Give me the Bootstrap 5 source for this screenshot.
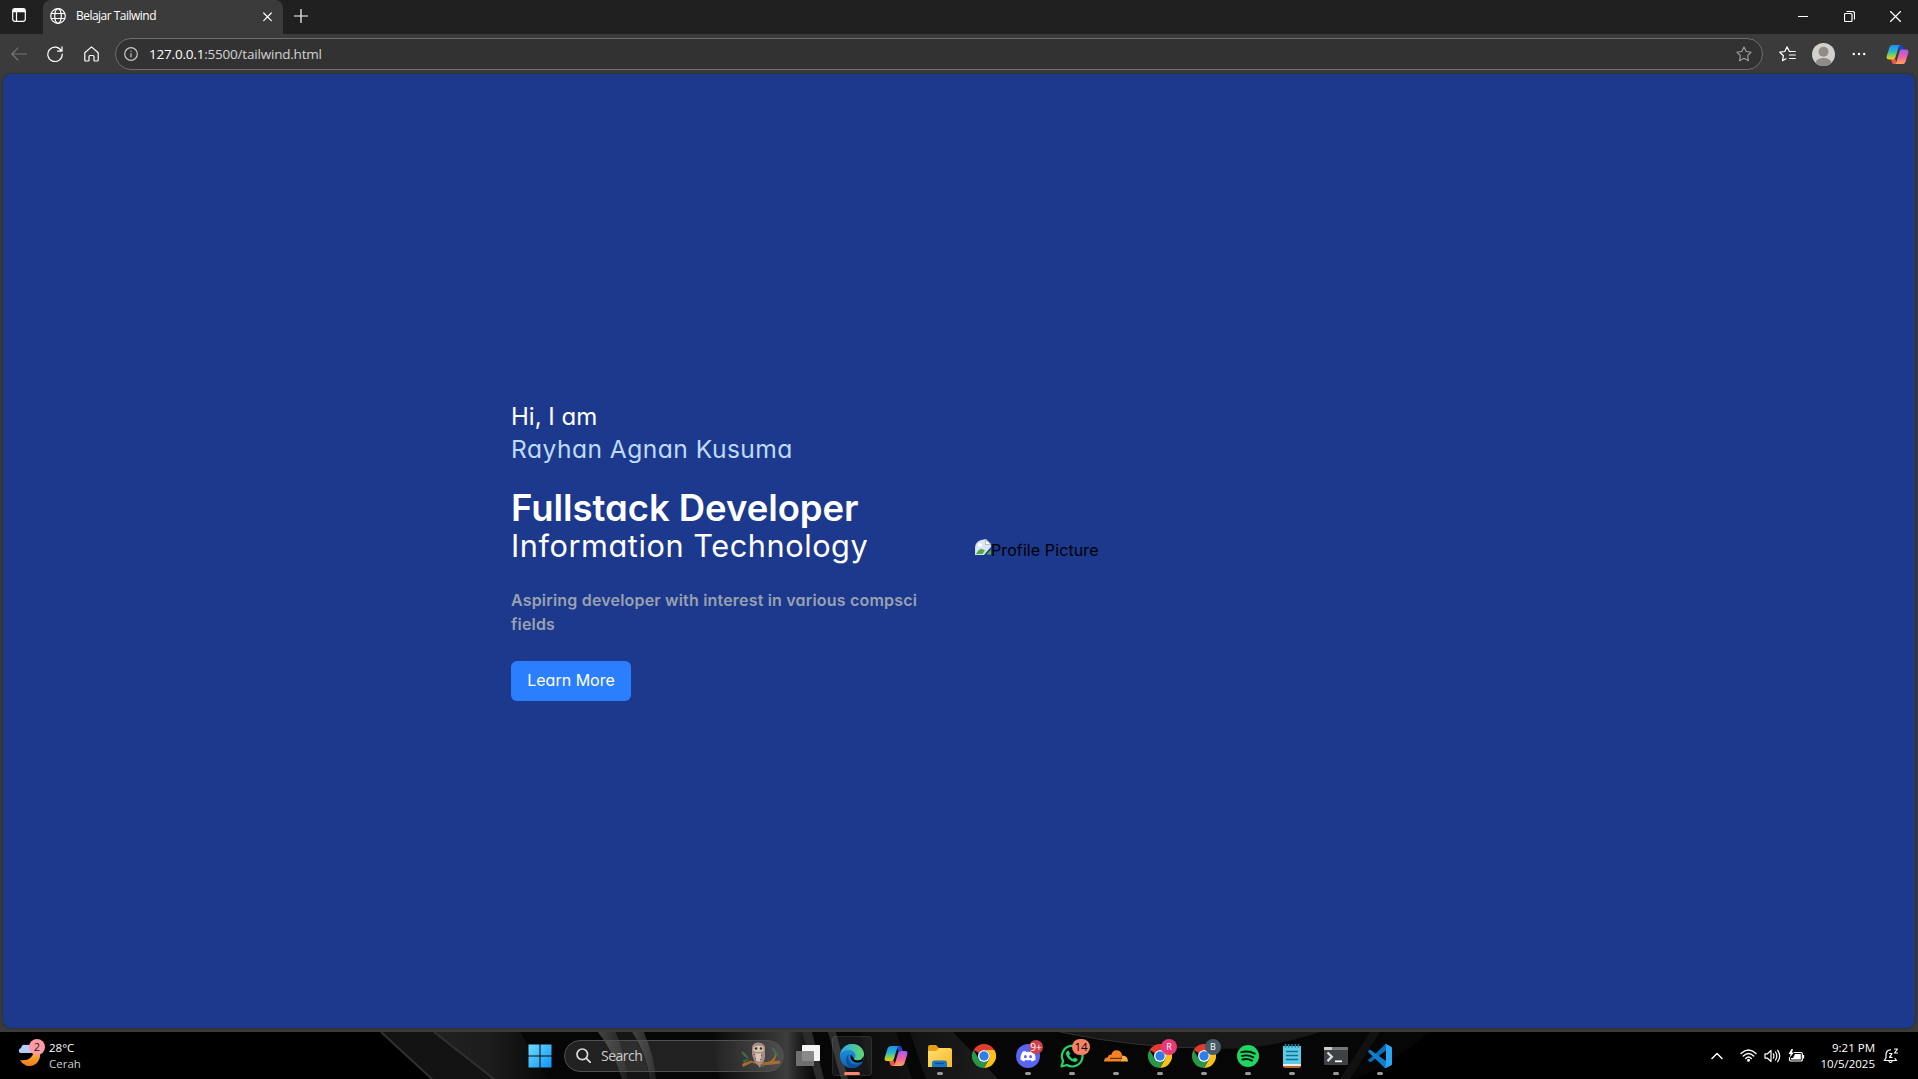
<!DOCTYPE html>
<html lang="en">
<head>
<meta charset="utf-8">
<meta name="viewport" content="width=device-width, initial-scale=1">
<title>Belajar Tailwind</title>
<link href="https://cdn.jsdelivr.net/npm/bootstrap@5.3.0/dist/css/bootstrap.min.css" rel="stylesheet">
<style>
  body { height: 100vh; overflow: hidden; background: #3b3b3b; font-family: "Open Sans", "Noto Sans", sans-serif; color: #fff; }
  svg { display: block; flex: none; }
  .ln { fill: none; stroke: #fff; stroke-width: 1.2; stroke-linecap: round; stroke-linejoin: round; }
  .titlebar { height: 34px; background: #202020; }
  .tab-actions { width: 43px; padding-left: 12px; }
  .browser-tab { width: 240px; background: #3b3b3b; border-radius: 8px 8px 0 0; padding: 0 9px 2px 7px; font-size: 12px; }
  .tab-title { margin-left: 10px; letter-spacing: -.52px; line-height: 16px; }
  .newtab { width: 35px; padding-bottom: 3px; }
  .winbtn { width: 46px; padding-bottom: 2px; }
  .toolbar { height: 40px; padding: 0 1px; }
  .tool { width: 36px; height: 40px; }
  .tool-wide { width: 40px; }
  .address { height: 32px; margin: 0 6px; padding: 0 10px 0 8px; background: #323232; border: 1px solid #6e6e6e; border-radius: 16px; font-size: 13.5px; }
  .url { margin-left: 11px; letter-spacing: -.2px; color: #d2d2d2; }
  .url b { font-weight: 400; color: #fff; }
  .frame { padding: 0 3px 4px; min-height: 0; }
  .hero { background: #1c398e; border-radius: 8px; padding-left: 508px; font-family: Inter, "Open Sans", sans-serif; font-feature-settings: "cv11"; box-shadow: 0 0 3px #0006; }
  .intro { width: 464px; }
  .hi, .who { font-size: 24px; line-height: 32px; font-weight: 400; }
  .who { color: #bedbff; font-size: 24.6px; letter-spacing: .47px; }
  .role { font-size: 36.5px; line-height: 38px; padding-bottom: 2px; font-weight: 600; letter-spacing: -.05px; }
  .field-name { font-size: 30.7px; line-height: 34px; padding-bottom: 2px; letter-spacing: .56px; }
  .about { width: 432px; color: #99a1af; font-weight: 600; font-size: 16px; line-height: 24px; letter-spacing: .19px; margin: -1px 0 25px; }
  .btn-learn { --bs-btn-bg: #2b7fff; --bs-btn-color: #fff; width: 120px; height: 40px; border: 0; border-radius: 6px; padding: 7px 0 9px; font-size: 16px; line-height: 24px; }
  .alt-text { font-size: 16px; line-height: 24px; color: #000; letter-spacing: .1px; padding-bottom: 3px; }
  .alt-text svg { margin-top: -6px; }
  .taskbar { height: 47px; background: #000; position: relative; }
  .wallpaper { position: absolute; left: 370px; top: 0; }
  .taskbar > .zone { position: relative; }
  .weather { width: 518px; padding-left: 17px; font-size: 11.5px; line-height: 16px; }
  .weather svg { margin-top: -6px; }
  .search-pill { width: 220px; height: 32px; margin: 0 2px; border-radius: 16px; border: 1px solid #505050; background: #ffffff1c; padding: 0 1px 0 11px; font-size: 14px; letter-spacing: -.5px; color: #ccc; }
  .search-pill span { margin-left: 10px; }
  .app { width: 44px; height: 47px; position: relative; }
  .app.on::before { content: ""; position: absolute; left: 2px; top: 4px; width: 40px; height: 40px; border-radius: 4px; background: #ffffff12; border: 1px solid #ffffff14; }
  .app.run::after { content: ""; position: absolute; left: 19px; bottom: 4px; width: 6px; height: 3px; border-radius: 2px; background: #9a9a9a; }
  .app.on::after { content: ""; position: absolute; left: 14px; bottom: 4px; width: 16px; height: 3px; border-radius: 2px; background: #fa8670; }
  .app svg { position: relative; }
  .bubble { position: absolute; left: 23px; top: 7px; width: 16px; height: 16px; border-radius: 8px; font-size: 9px; line-height: 16px; text-align: center; z-index: 1; }
  .b-dis { background: #d13f4c; top: 8px; width: 14px; height: 14px; line-height: 14px; font-size: 10px; }
  .b-wa { background: #fa8264; color: #000; left: 22px; width: 18px; font-size: 11.5px; }
  .b-r { background: #e93775; }
  .b-b { background: #455a64; }
  .tray { padding-right: 19px; }
  .clock { font-size: 11.5px; line-height: 16px; width: 64px; }
</style>
<script src="https://cdn.jsdelivr.net/npm/bootstrap@5.3.0/dist/js/bootstrap.bundle.min.js"></script>
</head>
<body class="d-flex flex-column">

<svg width="0" height="0" class="position-absolute">
  <defs>
    <linearGradient id="cpA" x1="0" y1="0" x2="0" y2="1"><stop offset="0" stop-color="#1b8ff0"/><stop offset=".45" stop-color="#2bb5c8"/><stop offset=".75" stop-color="#8fd04a"/><stop offset="1" stop-color="#f5c913"/></linearGradient>
    <linearGradient id="cpB" x1="0" y1="0" x2="0" y2="1"><stop offset="0" stop-color="#a45cf0"/><stop offset=".5" stop-color="#ee5fa4"/><stop offset="1" stop-color="#ffa552"/></linearGradient>
    <linearGradient id="edA" x1="0" y1="0" x2="1" y2="0"><stop offset="0" stop-color="#2ba7e8"/><stop offset="1" stop-color="#5fd86a"/></linearGradient>
    <linearGradient id="edB" x1="0" y1="0" x2="0" y2="1"><stop offset="0" stop-color="#1f9be6"/><stop offset="1" stop-color="#1263b8"/></linearGradient>
    <linearGradient id="winG" x1="0" y1="0" x2="1" y2="1"><stop offset="0" stop-color="#6fdcff"/><stop offset="1" stop-color="#0f93f5"/></linearGradient>
    <linearGradient id="moonG" x1="0" y1="0" x2="0" y2="1"><stop offset="0" stop-color="#ffc044"/><stop offset="1" stop-color="#ef7d1a"/></linearGradient>
    <linearGradient id="foldG" x1="0" y1="0" x2="1" y2="1"><stop offset="0" stop-color="#ffdf70"/><stop offset="1" stop-color="#f7b92a"/></linearGradient>
    <symbol id="copilot" viewBox="0 0 24 24">
      <path d="M12.500 2h3.200c1.200 0 1.800.8 2.200 2l1 3.200h-4.600z" fill="#1946c8"/>
      <path d="M11.500 22H8.300c-1.200 0-1.800-.8-2.200-2l-1-3.200h4.600z" fill="#f2554f"/>
      <path d="M7.200 2h8c-1.200.3-1.700 1-2.100 2.300L10 14.700c-.5 1.600-1.400 2.400-3 2.400H2.800C.7 17.100.2 15.600.8 13.600L3.400 5C4 3 5.200 2 7.200 2z" fill="url(#cpA)"/>
      <path d="M16.800 22h-8c1.200-.3 1.700-1 2.100-2.300L14 9.300c.5-1.600 1.400-2.400 3-2.400h4.200c2.100 0 2.600 1.500 2 3.500L20.600 19c-.6 2-1.800 3-3.800 3z" fill="url(#cpB)"/>
    </symbol>
    <symbol id="chrome" viewBox="0 0 24 24">
      <path d="M1.600 6A12 12 0 0 1 22.400 6H12a6 6 0 0 0-5.200 3z" fill="#e33b2e"/>
      <path d="M22.400 6A12 12 0 0 1 12 24l5.200-9A6 6 0 0 0 12 6z" fill="#fbc116"/>
      <path d="M12 24A12 12 0 0 1 1.600 6l5.200 9A6 6 0 0 0 17.200 15z" fill="#279847"/>
      <circle cx="12" cy="12" r="6" fill="#fff"/><circle cx="12" cy="12" r="4.700" fill="#2f7de9"/>
    </symbol>
  </defs>
</svg>

<header class="titlebar d-flex flex-shrink-0">
  <div class="tab-actions d-flex align-items-center pb-1">
    <svg width="14" height="14" viewBox="0 0 14 14"><rect x=".7" y=".7" width="12.600" height="12.600" rx="2.200" class="ln"/><path d="M1 4V3a2 2 0 0 1 2-2h8a2 2 0 0 1 2 2v1.300H1z" fill="#fff"/><path d="M4.500 4v9" class="ln"/></svg>
  </div>
  <div class="browser-tab d-flex align-items-center">
    <svg width="16" height="16" viewBox="0 0 16 16" class="ln"><circle cx="8" cy="8" r="7.300"/><ellipse cx="8" cy="8" rx="3.300" ry="7.300"/><path d="M1.400 5.500h13.200M1.400 10.500h13.200"/></svg>
    <span class="tab-title">Belajar Tailwind</span>
    <svg class="ms-auto" width="13" height="13" viewBox="0 0 13 13"><path d="M2.700 3l7.600 7.600M10.300 3l-7.600 7.600" class="ln"/></svg>
  </div>
  <div class="newtab d-flex align-items-center justify-content-center"><svg width="14" height="14" viewBox="0 0 14 14"><path d="M7 .5v13M.5 7h13" class="ln"/></svg></div>
  <div class="ms-auto d-flex">
    <div class="winbtn d-flex align-items-center justify-content-center"><svg width="10" height="10"><path d="M0 5.500h10" stroke="#fff"/></svg></div>
    <div class="winbtn d-flex align-items-center justify-content-center"><svg width="11" height="11" viewBox="0 0 11 11" class="ln"><rect x=".5" y="2.500" width="7.500" height="8" rx="1"/><path d="M3 .5h5.500a2 2 0 0 1 2 2V8"/></svg></div>
    <div class="winbtn d-flex align-items-center justify-content-center"><svg width="11" height="11" viewBox="0 0 11 11"><path d="M.5.5l10 10M10.500.5l-10 10" class="ln"/></svg></div>
  </div>
</header>

<nav class="toolbar d-flex align-items-center flex-shrink-0">
  <div class="tool d-flex align-items-center justify-content-center"><svg width="16" height="14" viewBox="0 0 16 14" class="ln" style="stroke:#767676"><path d="M7 .8L.8 7 7 13.200M1 7h14.500"/></svg></div>
  <div class="tool d-flex align-items-center justify-content-center"><svg width="16" height="16" viewBox="0 0 16 16" class="ln"><path d="M14.500 5.200A7.200 7.200 0 1 0 15.200 8M15 .8v4.400h-4.400"/></svg></div>
  <div class="tool d-flex align-items-center justify-content-center"><svg width="15" height="16" viewBox="0 0 15 16" class="ln"><path d="M.8 6.800L7.500.9l6.700 5.900V14q0 1-1 1h-2.400q-.8 0-.8-.8V10.500q0-1-1-1H6q-1 0-1 1v3.700q0 .8-.8.8H1.800q-1 0-1-1z"/></svg></div>
  <div class="address d-flex align-items-center flex-fill">
    <svg width="14" height="14" viewBox="0 0 14 14" class="ln" style="stroke:#c8c8c8"><circle cx="7" cy="7" r="6.300"/><path d="M7 6.500v3.300M7 4v.2"/></svg>
    <span class="url"><b>127.0.0.1</b>:5500/tailwind.html</span>
    <svg class="ms-auto" width="16" height="16" viewBox="0 0 16 16"><path d="M8 .9l2.200 4.600 5 .7-3.600 3.500.9 5L8 12.300l-4.500 2.400.9-5L.8 6.200l5-.7z" fill="none" stroke="#a0a0a0" stroke-width="1.100" stroke-linejoin="round"/></svg>
  </div>
  <div class="tool d-flex align-items-center justify-content-center"><svg width="17" height="16" viewBox="0 0 17 16" class="ln"><path d="M10.500 5.500L8 .9 5.800 5.500l-5 .7 3.600 3.500-.9 5L7 12.800M10.500 5.500h5.800M10.500 9h5.800M10.500 12.500h5.800"/></svg></div>
  <div class="tool d-flex align-items-center justify-content-center"><svg width="23" height="23" viewBox="0 0 23 23"><clipPath id="av"><circle cx="11.500" cy="11.500" r="11.500"/></clipPath><g clip-path="url(#av)"><rect width="23" height="23" fill="#d3d0cd"/><circle cx="11.500" cy="8.800" r="5" fill="#8f8b87"/><ellipse cx="11.500" cy="20" rx="8" ry="5" fill="#8f8b87"/></g></svg></div>
  <div class="tool d-flex align-items-center justify-content-center"><svg width="14" height="4" fill="#fff"><circle cx="1.800" cy="2" r="1.200"/><circle cx="7" cy="2" r="1.200"/><circle cx="12.200" cy="2" r="1.200"/></svg></div>
  <div class="tool tool-wide d-flex align-items-center justify-content-center"><svg width="23" height="23"><use href="#copilot"/></svg></div>
</nav>

<main class="frame d-flex flex-fill">
  <section class="hero d-flex align-items-center flex-fill">
    <div class="intro">
      <h1 class="hi m-0">Hi, I am</h1>
      <div class="who mb-4">Rayhan Agnan Kusuma</div>
      <h2 class="role m-0">Fullstack Developer</h2>
      <div class="field-name mb-4">Information Technology</div>
      <p class="about">Aspiring developer with interest in various compsci<br>fields</p>
      <a class="btn btn-learn d-block" href="#">Learn More</a>
    </div>
    <div class="alt-text d-flex align-items-center">
      <svg width="16" height="16" viewBox="0 0 16 16"><path d="M0 16V8Q1 1 8.500.5L11 0l5 5v3l-7 8z" fill="#cfdcf5"/><path d="M1 8Q2 2 10 1v4h5v3l-6.500 7H1z" fill="#d9e5fa"/><path d="M10.500.5v5H16z" fill="#fff" stroke="#999" stroke-width=".6"/><circle cx="5" cy="6" r="2" fill="#fff"/><path d="M1 15q4-8 9-3.500L7.500 15z" fill="#54ab37"/><path d="M11.500 15.500L16 10.500v5z" fill="#54ab37"/></svg>
      <span>Profile Picture</span>
    </div>
  </section>
</main>

<footer class="taskbar d-flex flex-shrink-0">
  <svg class="wallpaper" width="1130" height="47" viewBox="0 0 1130 47">
    <defs>
      <linearGradient id="w1" x1="0" y1="0" x2="1" y2="0"><stop offset="0" stop-color="#222"/><stop offset=".5" stop-color="#1c1c1c"/><stop offset="1" stop-color="#080808"/></linearGradient>
      <linearGradient id="w2" x1="0" y1="0" x2="1" y2="0"><stop offset="0" stop-color="#555" stop-opacity="0"/><stop offset=".7" stop-color="#555"/><stop offset="1" stop-color="#222" stop-opacity="0"/></linearGradient>
      <linearGradient id="w3" x1="0" y1="0" x2="1" y2="0"><stop offset="0" stop-color="#444"/><stop offset="1" stop-color="#1c1c1c"/></linearGradient>
      <linearGradient id="w4" x1="0" y1="0" x2="1" y2="0"><stop offset="0" stop-color="#0c0c0c"/><stop offset="1" stop-color="#1d1d1d"/></linearGradient>
    </defs>
    <path d="M11 0H1060Q1000 47 980 47H60z" fill="#060606"/>
    <path d="M11 0H64L124 47H62z" fill="#131313"/>
    <path d="M64 0H150L178 47H124z" fill="url(#w1)"/>
    <path d="M11 0L62 47M64 0L124 47" stroke="#303030" stroke-width="2"/>
    <path d="M228 0h18q10 24 12 47h-6Q244 20 228 0z" fill="url(#w3)"/>
    <path d="M246 0h16q12 20 18 47h-22Q256 20 246 0z" fill="#151515"/>
    <path d="M262 0h12q10 24 12 47h-6Q276 20 262 0z" fill="url(#w3)"/>
    <path d="M340 0H436L450 47H350z" fill="url(#w2)" opacity=".7"/>
    <path d="M432 0h10l12 47h-8zM458 0h8l12 47h-7z" fill="#2b2b2b"/>
    <path d="M490 0h36l16 47h-40zM540 0h43l45 47h-72z" fill="url(#w4)"/>
    <path d="M690 0H950Q900 17 850 17Q760 16 690 0z" fill="#181818"/>
    <path d="M690 0Q770 17 850 16" stroke="#303030" fill="none"/>
    <path d="M1000 0h10l-30 47h-10z" fill="#111"/>
  </svg>

  <div class="zone weather d-flex align-items-center">
    <svg width="28" height="30" viewBox="0 0 28 30"><path d="M22 13a10.500 10.500 0 0 1-19 9q8 1.500 12-4 3-4 1-8z" fill="url(#moonG)"/><path d="M3 15q-3-3 1-5 1-4.500 5-3 5-1 5 4l1 4z" fill="#b5cdf7"/><circle cx="20" cy="9" r="8" fill="#ff99a4"/><text x="20" y="13" text-anchor="middle" font-size="11" fill="#222">2</text></svg>
    <div class="ms-1"><div>28°C</div><div style="color:#ccc">Cerah</div></div>
  </div>

  <div class="zone d-flex align-items-center">
    <div class="app d-flex align-items-center justify-content-center"><svg width="24" height="24" viewBox="0 0 24 24" fill="url(#winG)"><path d="M.5.5h11v11H.5zM12.500.5h11v11h-11zM.5 12.500h11v11H.5zM12.500 12.500h11v11h-11z"/></svg></div>
    <div class="search-pill d-flex align-items-center">
      <svg width="15" height="15" viewBox="0 0 15 15" class="ln" style="stroke-width:1.700;stroke:#ddd"><circle cx="6.300" cy="6.300" r="5.300"/><path d="M10.300 10.300l4 4"/></svg>
      <span>Search</span>
      <svg class="ms-auto" width="42" height="28" viewBox="0 0 42 28">
        <path d="M2 22q4-2 9-3.500 8 3 16 1.500l13-1.500v3q-8 1-14 1.500-8 1-14-2.500L3 25z" fill="#a86c32"/>
        <path d="M28 20q6-2 7-8l1-3v4q0 5-4 8z" fill="#a86c32"/>
        <path d="M1 9q5 1 8 8-6-2-8-8zM3 18l7-1-6 4zM31 5q5 2 7 8-5-2-7-8zM37 10l2 5-4-2zM21 22l4 3h-5z" fill="#3f6b48"/>
        <path d="M12 6q0-5 6-5.500Q25 1 25 6v8q0 6-4 8l-1 4-3-4q-4-4-5-10z" fill="#a98d83"/>
        <path d="M13.500 5q5-2.500 10 0v4q-5 2-10 0z" fill="#d8c9b8"/><path d="M15 11q4 1 6 0v7q-2 3-5 0z" fill="#d9c7bd"/>
        <circle cx="16" cy="6.500" r="1.300" fill="#38311c"/><circle cx="21" cy="6.500" r="1.300" fill="#38311c"/><path d="M18 8h1.500l-.8 2z" fill="#e8c34a"/>
        <path d="M14 12l1 1m0 3l1 1m5-4l1 1m-2 3l1 1" stroke="#6d4a43"/>
      </svg>
    </div>
    <div class="app d-flex align-items-center justify-content-center"><svg width="24" height="22" viewBox="0 0 24 22"><rect x="6" y="0" width="18" height="16" rx="1" fill="#f4f4f4"/><rect x="0" y="6" width="18" height="15" rx="1" fill="#7b7b7b" fill-opacity=".88"/></svg></div>
    <div class="app on d-flex align-items-center justify-content-center"><svg width="24" height="24" viewBox="0 0 24 24"><circle cx="12" cy="12" r="12" fill="url(#edB)"/><path d="M.2 10.500C1.500 4 6.500 0 12 0c7 0 12 5 12 10.300 0 4-3 6.200-6.300 6.200-2.700 0-4-.9-3.600-1.900.3-.7 1.300-1.100 1.300-3C15.400 8.500 12.500 6 8.500 6 5 6 1.600 7.500.2 10.500z" fill="url(#edA)"/><path d="M9.500 9.500c-2.500 3-1.500 9.500 4.500 11 3.500.8 6.500-.2 8.500-2.500a12 12 0 0 1-9 6C6 23.500 3.500 14 9.500 9.500z" fill="#0c4f9a"/><path d="M11 10.500c-1.500 3 .5 7.500 6 8 2.500.2 4.500-.5 5.800-1.200L24 12l-3 3.800c-3 1.300-7.300.7-7-1z" fill="#000"/></svg></div>
    <div class="app d-flex align-items-center justify-content-center"><svg width="24" height="24"><use href="#copilot"/></svg></div>
    <div class="app run d-flex align-items-center justify-content-center"><svg width="24" height="22" viewBox="0 0 24 22"><path d="M0 2q0-2 2-2h6l3 3h11v5H0z" fill="#e29f14"/><path d="M0 6h8l3-3h11q2 0 2 2v17H0z" fill="url(#foldG)"/><path d="M4 22v-4q0-2.500 2.500-2.500h10q2.500 0 2.500 2.500v4z" fill="#1979c8"/><path d="M7 18.500h9" stroke="#0d4c85" stroke-width="1.300"/></svg></div>
    <div class="app d-flex align-items-center justify-content-center"><svg width="24" height="24"><use href="#chrome"/></svg></div>
    <div class="app run d-flex align-items-center justify-content-center"><svg width="24" height="24" viewBox="0 0 24 24"><circle cx="12" cy="12" r="12" fill="#5865f2"/><path d="M9.500 7Q7.500 7.200 6.300 8 4.300 11.500 4.500 15.800q1.700 1.400 3.800 1.600l.9-1.500q2.800.8 5.600 0l.9 1.500q2.100-.2 3.800-1.600.2-4.300-1.800-7.800-1.200-.8-3.200-1l-.5 1q-2-.4-4 0z" fill="#fff"/><ellipse cx="9.400" cy="12.700" rx="1.400" ry="1.600" fill="#5865f2"/><ellipse cx="14.600" cy="12.700" rx="1.400" ry="1.600" fill="#5865f2"/></svg><span class="bubble b-dis">9+</span></div>
    <div class="app run d-flex align-items-center justify-content-center"><svg width="24" height="24" viewBox="0 0 24 24"><path d="M1.500 22.500l1.600-5.600A10.300 10.300 0 1 1 7 21z" fill="none" stroke="#25d366" stroke-width="2.200" stroke-linejoin="round"/><path d="M8.500 6.500l1.600 3.300-1 1.500q1.500 2.700 4 3.700l1.500-1.600 3 1.500q0 2.600-3 3-3-.2-6-3.200-2.600-2.800-2.700-5.200 0-2.500 2.600-3z" fill="#25d366"/></svg><span class="bubble b-wa">14</span></div>
    <div class="app run d-flex align-items-center justify-content-center"><svg width="24" height="12" viewBox="0 0 24 12"><path d="M0 11.500q0-4 4-4.300 0-2.800 3.300-2.400Q8.500 0 13 .3q4.500.6 5 5l-1.500 6.200z" fill="#f6821f"/><path d="M16.500 11.500l1.700-6q5.600-.2 5.800 6z" fill="#fbad41"/><path d="M6 8.300h12" stroke="#2a1605" stroke-width=".9"/></svg></div>
    <div class="app run d-flex align-items-center justify-content-center"><svg width="24" height="24"><use href="#chrome"/></svg><span class="bubble b-r">R</span></div>
    <div class="app run d-flex align-items-center justify-content-center"><svg width="24" height="24"><use href="#chrome"/></svg><span class="bubble b-b">B</span></div>
    <div class="app run d-flex align-items-center justify-content-center"><svg width="22" height="22" viewBox="0 0 22 22"><circle cx="11" cy="11" r="11" fill="#1ed760"/><path d="M4.300 7.200q7-2 13.500 1.400M4.900 11q6-1.700 11.500 1.300M5.400 14.500q5-1.400 9.600 1.100" fill="none" stroke="#06150b" stroke-width="1.900" stroke-linecap="round"/></svg></div>
    <div class="app run d-flex align-items-center justify-content-center"><svg width="18" height="24" viewBox="0 0 18 24"><path d="M0 20h18v2q0 2-2 2H2q-2 0-2-2z" fill="#b5651d"/><path d="M0 20h18v2H0z" fill="#eee"/><path d="M0 2h18v18H0z" fill="#5ccbe8"/><path d="M3 7.500h12M3 11.500h12M3 15.500h12" stroke="#12708f" stroke-width="1.600"/><path d="M2.500 0v3.500M5.700 0v3.500M9 0v3.500M12.300 0v3.500M15.500 0v3.500" stroke="#1784a8" stroke-width="1.500"/></svg></div>
    <div class="app run d-flex align-items-center justify-content-center"><svg width="24" height="18" viewBox="0 0 24 18"><rect width="24" height="18" rx="1" fill="#3f4244"/><path d="M0 3V1q0-1 1-1h22q1 0 1 1v2z" fill="#777"/><path d="M0 3V1q0-1 1-1h7v3z" fill="#ccc"/><path d="M3.500 5.500l4.300 4.300-4.300 4.300" fill="none" stroke="#ddd" stroke-width="2.300"/><path d="M11 14.300h7" stroke="#fff" stroke-width="1.700"/></svg></div>
    <div class="app run d-flex align-items-center justify-content-center"><svg width="24" height="24" viewBox="0 0 24 24"><path d="M18 0L5.500 12 2.300 14.800.3 16l-.2.8 1.700 1.700 1.200-.1L18 7z" fill="#0a6cb5" transform="translate(0 -.5)"/><path d="M1.800 5.500L.2 7v1l16 15.300q.8.900 1.800.7v-7z" fill="#0e80cf"/><path d="M17 .3L18 0l5 2.400q1 .5 1 1.600v16q0 1.100-1 1.600L18 24q-1 .2-1.800-.7 1.800.2 1.800-1.500V2Q18 .3 17 .3z" fill="#2aa5f2"/></svg></div>
  </div>

  <div class="zone tray d-flex align-items-center ms-auto">
    <svg width="12" height="8" viewBox="0 0 12 8" class="ln" style="stroke-width:1.500;margin-right:17px"><path d="M1 6.500l5-5 5 5"/></svg>
    <svg width="17" height="13" viewBox="0 0 17 13" class="ln" style="stroke-width:1.400;margin-right:7px"><path d="M1 4.500q7.500-7 15 0M3.300 7q5.200-5 10.400 0M5.700 9.400q2.800-2.600 5.600 0"/><circle cx="8.500" cy="11.300" r=".8" fill="#fff"/></svg>
    <svg width="17" height="14" viewBox="0 0 17 14" class="ln" style="margin-right:7px"><path d="M1 4.800h2.500L7 1.500v11L3.500 9.200H1zM9.300 4.800q1.300 2.200 0 4.400M11.500 3q2.600 4 0 8M13.700 1.300q4 5.700 0 11.400"/></svg>
    <svg width="17" height="14" viewBox="0 0 17 14" style="margin-right:6px"><path d="M6.500 3.500H13q1.300 0 1.300 1.300v5.900q0 1.300-1.300 1.300H2.800q-1.300 0-1.300-1.300V8.500" class="ln"/><path d="M7 5h5.800v5.500H3V9h2zM14.800 6h1.400v3.500h-1.400z" fill="#fff"/><path d="M3.500 0L.5 5h2L1.800 8.500 6 3.500H4L5 0z" fill="#fff"/></svg>
    <div class="clock text-end"><div>9:21 PM</div><div>10/5/2025</div></div>
    <svg width="16" height="16" viewBox="0 0 16 16" class="ln" style="margin-left:8px"><path d="M7.500 1.800Q3 2 3 7v3l-1.800 2.500h12.300L12 10.500M6 13.500q1.500 2 3 0M6.500 5.500H9l-2.500 3.800H9M11.500 1h3L11.500 5h3"/></svg>
  </div>
</footer>
</body>
</html>
